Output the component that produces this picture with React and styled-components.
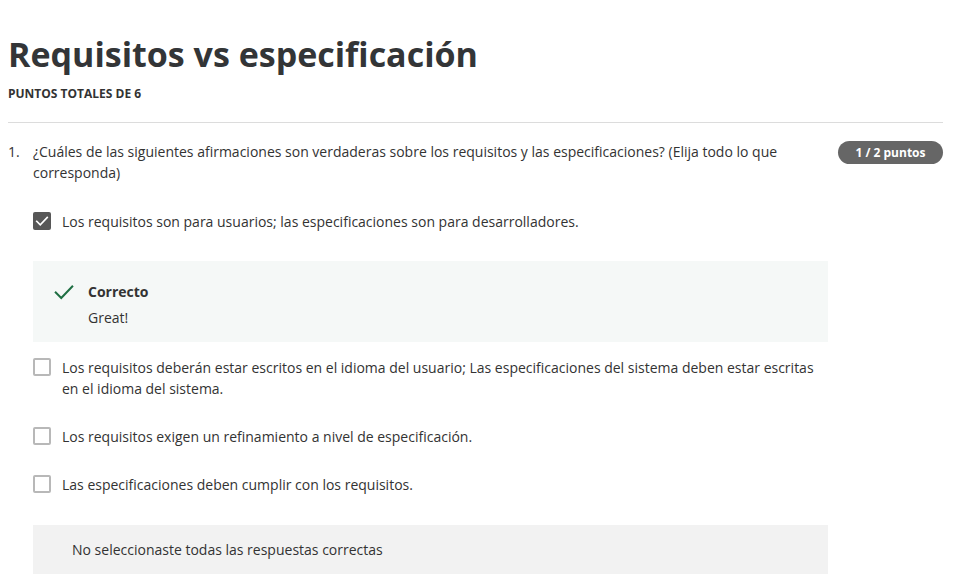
import React from 'react';
import styled, { createGlobalStyle } from 'styled-components';

const GlobalStyle = createGlobalStyle`
  body {
    margin: 0;
    background: #fff;
    font-family: 'Open Sans', 'Noto Sans', sans-serif;
    color: #333;
  }
`;

const Page = styled.div`
  padding: 28px 26px 0 8px;
`;

const Title = styled.h1`
  font-size: 34px;
  font-weight: 700;
  color: #333537;
  margin: 0;
  line-height: 52px;
`;

const Subtitle = styled.div`
  font-size: 12px;
  font-weight: 700;
  color: #333;
  margin-top: 5px;
`;

const Divider = styled.hr`
  border: none;
  border-top: 1px solid #dcdcdc;
  margin: 20px 0 18px;
`;

const QuestionRow = styled.div`
  display: flex;
  align-items: flex-start;
  font-size: 14px;
  line-height: 21px;
`;

const Number = styled.span`
  width: 25px;
  flex-shrink: 0;
`;

const QuestionText = styled.div`
  flex: 1;
  padding-right: 40px;
`;

const Badge = styled.span`
  flex-shrink: 0;
  background: #666;
  color: #fff;
  font-size: 12px;
  font-weight: 700;
  border-radius: 12px;
  height: 23px;
  line-height: 23px;
  width: 105px;
  text-align: center;
`;

const Answers = styled.div`
  margin-left: 25px;
  width: 795px;
  margin-top: 28px;
`;

const Option = styled.div`
  display: flex;
  align-items: flex-start;
  gap: 11px;
  font-size: 14px;
  line-height: 21px;
  margin-bottom: ${p => p.$mb}px;
`;

const Box = styled.span`
  width: 18px;
  height: 18px;
  box-sizing: border-box;
  flex-shrink: 0;
  margin-top: 1px;
  border-radius: 2px;
  border: ${p => (p.$checked ? 'none' : '2px solid #b8b8b8')};
  background: ${p => (p.$checked ? '#575757' : '#fff')};
  display: flex;
  align-items: center;
  justify-content: center;
`;

const OptionText = styled.div`
  flex: 1;
  padding-right: 10px;
`;

const Feedback = styled.div`
  background: ${p => p.$bg};
  display: flex;
  gap: 13px;
  padding: ${p => p.$pad};
  font-size: 14px;
  line-height: 21px;
  margin-bottom: ${p => p.$mb}px;
`;

const FeedbackTitle = styled.div`
  font-weight: 700;
  margin-bottom: 5px;
`;

const Check = ({ color, size, width }) => (
  <svg width={size} height={size} viewBox="0 0 24 24" fill="none">
    <path d="M3 12.5l6 6L21 6" stroke={color} strokeWidth={width} strokeLinecap="square" />
  </svg>
);

export default function App() {
  return (
    <Page>
      <GlobalStyle />
      <Title>Requisitos vs especificación</Title>
      <Subtitle>PUNTOS TOTALES DE 6</Subtitle>
      <Divider />
      <QuestionRow>
        <Number>1.</Number>
        <QuestionText>
          ¿Cuáles de las siguientes afirmaciones son verdaderas sobre los requisitos y las especificaciones? (Elija todo lo que corresponda)
        </QuestionText>
        <Badge>1 / 2 puntos</Badge>
      </QuestionRow>
      <Answers>
        <Option $mb={29}>
          <Box $checked>
            <Check color="#fff" size={14} width={2.8} />
          </Box>
          <OptionText>Los requisitos son para usuarios; las especificaciones son para desarrolladores.</OptionText>
        </Option>
        <Feedback $bg="#f5f8f7" $pad="20px 20px 14px 20px" $mb={15}>
          <Check color="#1f6f43" size={22} width={2.2} />
          <div>
            <FeedbackTitle>Correcto</FeedbackTitle>
            <div>Great!</div>
          </div>
        </Feedback>
        <Option $mb={27}>
          <Box />
          <OptionText>
            Los requisitos deberán estar escritos en el idioma del usuario; Las especificaciones del sistema deben estar escritas en el idioma del sistema.
          </OptionText>
        </Option>
        <Option $mb={27}>
          <Box />
          <OptionText>Los requisitos exigen un refinamiento a nivel de especificación.</OptionText>
        </Option>
        <Option $mb={30}>
          <Box />
          <OptionText>Las especificaciones deben cumplir con los requisitos.</OptionText>
        </Option>
        <Feedback $bg="#f2f2f2" $pad="14px 39px" $mb={0}>
          No seleccionaste todas las respuestas correctas
        </Feedback>
      </Answers>
    </Page>
  );
}
